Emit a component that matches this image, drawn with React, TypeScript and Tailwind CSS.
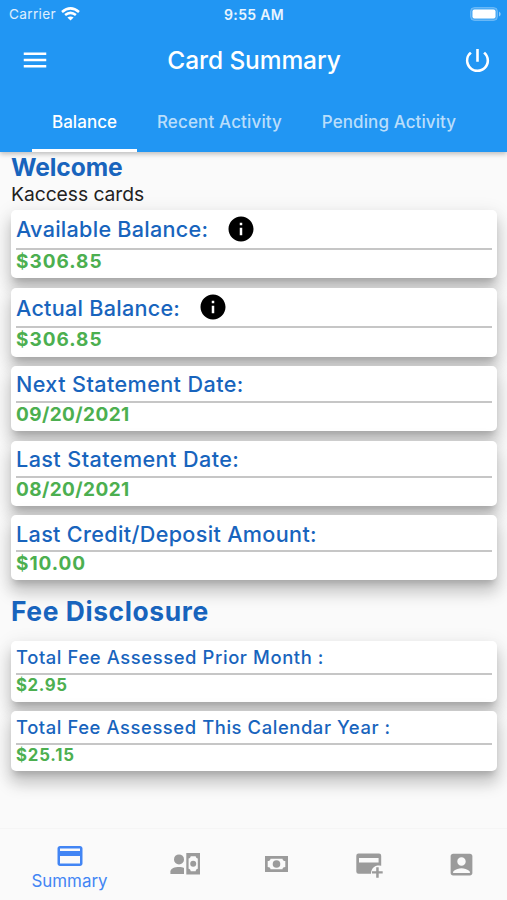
import React from "react";
import { MdAccountBox, MdInfo, MdMenu, MdPowerSettingsNew, MdPayment } from "react-icons/md";

type CardProps = { title: string; value: string; info?: boolean; track: string; valueTrack: string };

function StatusBar() {
  return (
    <div className="grid h-[28px] grid-cols-3 items-center pr-[6px] pl-[9px]">
      <div className="flex items-center gap-[5px]">
        <span className="text-[13.6px] leading-[28px] text-white/85 tracking-[0.35px]">Carrier</span>
        <svg className="h-[14px] w-[19px]" viewBox="0 0 19 14" fill="none" stroke="#fff" strokeWidth="2.6">
          <path d="M1 4.9Q9.5-2 18 4.9" />
          <path d="M4.1 8.1Q9.5 3.7 14.9 8.1" />
          <path d="M9.5 13.6 6.4 10.5Q9.5 8.3 12.6 10.5Z" fill="#fff" stroke="none" />
        </svg>
      </div>
      <span className="pr-[2px] text-center text-[14px] font-semibold text-white/90 tracking-[0.3px]">9:55 AM</span>
      <svg className="h-[14px] w-[31px] justify-self-end" viewBox="0 0 31 14">
        <rect x="0.5" y="0.5" width="27" height="13" rx="4" fill="#fff" fillOpacity="0.2" stroke="#fff" strokeOpacity="0.25" />
        <rect x="2.5" y="2.5" width="23" height="9" rx="2" fill="#fff" />
        <path d="M29 4.5q1.7 1 1.7 2.5T29 9.5z" fill="#fff" fillOpacity="0.5" />
      </svg>
    </div>
  );
}

function Header() {
  return (
    <header className="relative z-10 h-[152px] shrink-0 bg-[#2196f3] shadow-[0_2px_5px_rgba(0,0,0,0.25)]">
      <StatusBar />
      <div className="flex h-[64px] items-center justify-between pr-[14px] pl-[20px] text-white">
        <MdMenu size={30} />
        <h1 className="pr-[4px] text-[24.5px] font-medium tracking-[-0.1px]">Card Summary</h1>
        <MdPowerSettingsNew size={31} />
      </div>
      <nav className="flex h-[60px] pl-[32px] text-[17px] font-medium text-white/70">
        <div className="flex w-[105px] justify-center border-b-3 border-white pt-[18px] text-white tracking-[0.05px]">Balance</div>
        <div className="flex w-[165px] justify-center pt-[18px] tracking-[0.15px]">Recent Activity</div>
        <div className="flex w-[174px] justify-center pt-[18px] tracking-[0.1px]">Pending Activity</div>
      </nav>
    </header>
  );
}

const shadow = "shadow-[0_6px_6px_-3px_rgba(0,0,0,0.16),0_12px_16px_1px_rgba(0,0,0,0.18),0_4px_18px_3px_rgba(0,0,0,0.07)]";

function BalanceCard({ title, value, info, track, valueTrack }: CardProps) {
  return (
    <div className={`rounded-[5px] bg-white px-[5px] ${shadow} ${info ? "h-[68.9px]" : "h-[65.2px]"}`}>
      <div className={`flex items-center gap-[18px] border-b-2 border-[#c6c6c6] ${info ? "h-[40px]" : "h-[37px]"}`}>
        <span className={`pt-[2px] text-[21.6px] font-[450] text-[#1864bd] ${track}`}>{title}</span>
        {info && <MdInfo size={30} color="#000" />}
      </div>
      <div className={`text-[19px] leading-[24px] font-bold text-[#4caf50] ${valueTrack}`}>{value}</div>
    </div>
  );
}

function FeeCard({ title, value, track, valueTrack }: CardProps) {
  return (
    <div className={`h-[60.1px] rounded-[5px] bg-white px-[5px] ${shadow}`}>
      <div className="flex h-[34px] items-center border-b-2 border-[#c6c6c6]">
        <span className={`pt-[1px] text-[18.4px] font-[450] text-[#1864bd] ${track}`}>{title}</span>
      </div>
      <div className={`text-[16.8px] leading-[21px] font-bold text-[#4caf50] ${valueTrack}`}>{value}</div>
    </div>
  );
}

function PersonCashIcon() {
  return (
    <svg className="h-[22px] w-[30px]" viewBox="0 0 30 22" fill="#9b9b9b">
      <circle cx="9" cy="6.4" r="5" />
      <path d="M.4 21v-2.4C.4 15.4 5 14 9 14c2 0 3.7.4 5 1v6z" />
      <path fillRule="evenodd" d="M16.3 0H30v21.4H16.3zM20.7 3.2c0 1.2-1 2.2-2.1 2.4v10.2c1.1.2 2.1 1.2 2.1 2.4h5c0-1.2 1-2.2 2.1-2.4V5.6c-1.1-.2-2.1-1.2-2.1-2.4z" />
      <circle cx="23.2" cy="10.7" r="3" />
    </svg>
  );
}

function CashIcon() {
  return (
    <svg className="h-[16px] w-[23px]" viewBox="0 0 23 16" fill="#9b9b9b">
      <path fillRule="evenodd" d="M0 0h23v16H0zM5.5 2.7C5.5 4.2 4.2 5 2.7 5v6c1.5 0 2.8.8 2.8 2.3h12c0-1.5 1.3-2.3 2.8-2.3V5c-1.5 0-2.8-.8-2.8-2.3z" />
      <circle cx="11.5" cy="8" r="3.8" />
    </svg>
  );
}

function AddCardIcon() {
  return (
    <svg className="h-[25px] w-[27px]" viewBox="0 0 27 25" fill="#9b9b9b">
      <path fillRule="evenodd" d="M2.5.5h20.5a2.2 2.2 0 0 1 2.2 2.2v10a8 8 0 0 0-10.2 8H2.5A2.2 2.2 0 0 1 .3 18.5V2.7A2.2 2.2 0 0 1 2.5.5zM3 5v4.5h19.6V5z" />
      <path d="M20.2 14.2h2.5v4h4v2.4h-4v4.2h-2.5v-4.2H16v-2.4h4.2z" />
    </svg>
  );
}

export default function App() {
  return (
    <main className="flex h-[900px] w-[507px] flex-col overflow-hidden bg-[#fafafa] font-['Inter','Liberation_Sans',sans-serif]">
      <Header />
      <section className="flex-1 pr-[10px] pl-[11px]">
        <h2 className="text-[24.6px] leading-[30px] font-bold text-[#1864bd] tracking-[-0.1px]">Welcome</h2>
        <p className="h-[27.5px] text-[19.3px] leading-[24px] text-[#222] tracking-[-0.05px]">Kaccess cards</p>
        <div className="flex flex-col gap-[9.4px]">
          <BalanceCard title="Available Balance:" value="$306.85" info track="tracking-[0.26px]" valueTrack="tracking-[1px]" />
          <BalanceCard title="Actual Balance:" value="$306.85" info track="tracking-[0.26px]" valueTrack="tracking-[1px]" />
          <BalanceCard title="Next Statement Date:" value="09/20/2021" track="tracking-[0.4px]" valueTrack="tracking-[0.4px]" />
          <BalanceCard title="Last Statement Date:" value="08/20/2021" track="tracking-[0.42px]" valueTrack="tracking-[0.4px]" />
          <BalanceCard title="Last Credit/Deposit Amount:" value="$10.00" track="tracking-[0.33px]" valueTrack="tracking-[0.95px]" />
        </div>
        <h2 className="h-[61px] pt-[14px] text-[26.4px] leading-[34px] font-bold text-[#1864bd] tracking-[0.6px]">Fee Disclosure</h2>
        <div className="flex flex-col gap-[9.4px]">
          <FeeCard title="Total Fee Assessed Prior Month :" value="$2.95" track="tracking-[0.6px]" valueTrack="tracking-[0.6px]" />
          <FeeCard title="Total Fee Assessed This Calendar Year :" value="$25.15" track="tracking-[0.58px]" valueTrack="tracking-[0.8px]" />
        </div>
      </section>
      <nav className="grid h-[72px] shrink-0 grid-cols-[138px_93px_91px_94px_91px] border-t border-[#f5f5f5] text-[#9b9b9b]">
        <div className="flex flex-col items-center pt-[12px] pl-[1px] text-[#4285f4]">
          <MdPayment size={30} />
          <span className="text-[16.9px] leading-[20px]">Summary</span>
        </div>
        <div className="flex h-[70px] items-center justify-center"><PersonCashIcon /></div>
        <div className="flex h-[70px] items-center justify-center"><CashIcon /></div>
        <div className="flex h-[72px] items-center justify-center"><AddCardIcon /></div>
        <div className="flex h-[70px] items-center justify-center"><MdAccountBox size={29} /></div>
      </nav>
    </main>
  );
}
